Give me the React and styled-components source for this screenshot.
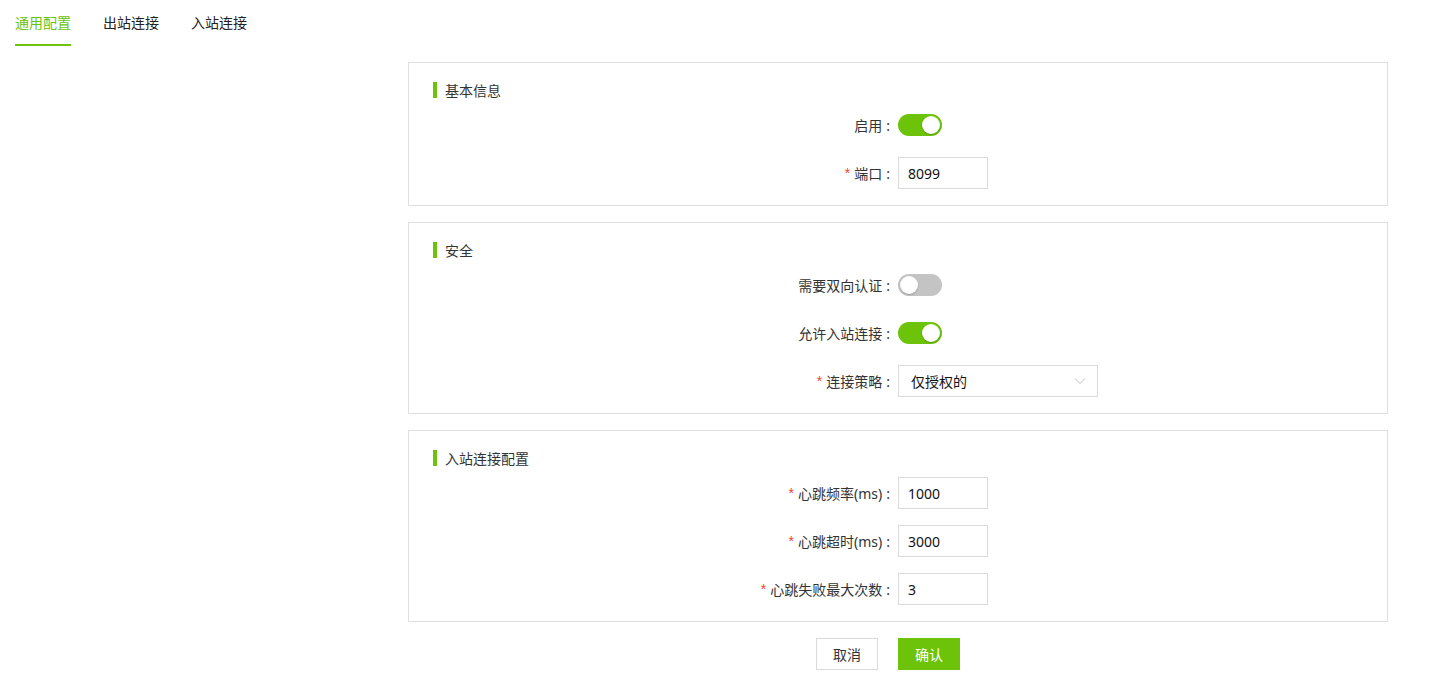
import React, { useState } from "react";
import styled, { createGlobalStyle } from "styled-components";

const GlobalStyle = createGlobalStyle`
  body {
    margin: 0;
    background: #fff;
    font-family: "Noto Sans", "Noto Sans CJK SC", sans-serif;
    font-size: 14px;
    color: #333;
  }
`;

const GREEN = "#6cc30a";

const TabBar = styled.div`
  display: flex;
  gap: 32px;
  padding: 0 15px;
  height: 46px;
`;

const Tab = styled.div`
  padding: 12px 0 10px;
  line-height: 22px;
  font-size: 14px;
  color: ${(p) => (p.$active ? GREEN : "#222")};
  border-bottom: 2px solid ${(p) => (p.$active ? GREEN : "transparent")};
  cursor: pointer;
`;

const Content = styled.div`
  width: 980px;
  margin: 16px 0 0 408px;
  display: flex;
  flex-direction: column;
  gap: 16px;
`;

const Card = styled.section`
  border: 1px solid #e0e0e0;
  padding: 19px 24px 16px;
`;

const SectionTitle = styled.h3`
  margin: 0 0 11px;
  height: 16px;
  display: flex;
  align-items: center;
  font-size: 14px;
  font-weight: normal;
  color: #333;
  &::before {
    content: "";
    width: 4px;
    height: 16px;
    background: ${GREEN};
    margin-right: 8px;
  }
`;

const Rows = styled.div`
  display: flex;
  flex-direction: column;
  gap: 16px;
`;

const Row = styled.div`
  display: grid;
  grid-template-columns: 1fr 1fr;
  height: 32px;
  align-items: center;
`;

const Label = styled.label`
  display: flex;
  justify-content: flex-end;
  align-items: center;
  color: #333;
  white-space: nowrap;
`;

const Star = styled.span`
  color: #f04134;
  margin-right: 4px;
  font-family: "Liberation Sans", sans-serif;
`;

const Colon = styled.span`
  margin: 0 8px 0 4px;
`;

const Control = styled.div`
  display: flex;
  align-items: center;
`;

const SwitchTrack = styled.button`
  position: relative;
  width: 44px;
  height: 22px;
  border: none;
  border-radius: 11px;
  padding: 0;
  background: ${(p) => (p.$on ? GREEN : "#c4c4c4")};
  cursor: pointer;
  &::after {
    content: "";
    position: absolute;
    top: 2px;
    left: ${(p) => (p.$on ? "24px" : "2px")};
    width: 18px;
    height: 18px;
    border-radius: 50%;
    background: #fff;
    box-shadow: 0 1px 2px rgba(0, 0, 0, 0.2);
    transition: left 0.15s;
  }
`;

const Input = styled.input`
  box-sizing: border-box;
  width: 90px;
  height: 32px;
  border: 1px solid #d9d9d9;
  padding: 0 9px;
  font-family: "Noto Sans", "Noto Sans CJK SC", sans-serif;
  font-size: 14px;
  color: #111;
  outline: none;
`;

const Select = styled.div`
  box-sizing: border-box;
  width: 200px;
  height: 32px;
  border: 1px solid #d9d9d9;
  padding: 0 11px 0 12px;
  display: flex;
  align-items: center;
  justify-content: space-between;
  color: #111;
`;

const ButtonRow = styled.div`
  display: grid;
  grid-template-columns: 1fr 1fr;
`;

const Button = styled.button`
  width: 62px;
  height: 32px;
  font-family: "Noto Sans", "Noto Sans CJK SC", sans-serif;
  font-size: 14px;
  border: 1px solid ${(p) => (p.$primary ? GREEN : "#d9d9d9")};
  background: ${(p) => (p.$primary ? GREEN : "#fff")};
  color: ${(p) => (p.$primary ? "#fff" : "#333")};
  cursor: pointer;
`;

const CancelCell = styled.div`
  display: flex;
  justify-content: flex-end;
  padding-right: 20px;
`;

function Switch({ on, onToggle }) {
  return <SwitchTrack $on={on} onClick={onToggle} />;
}

function Field({ label, required, children }) {
  return (
    <Row>
      <Label>
        {required && <Star>*</Star>}
        {label}
        <Colon>:</Colon>
      </Label>
      <Control>{children}</Control>
    </Row>
  );
}

export default function App() {
  const [enabled, setEnabled] = useState(true);
  const [mutual, setMutual] = useState(false);
  const [inbound, setInbound] = useState(true);

  return (
    <>
      <GlobalStyle />
      <TabBar>
        <Tab $active>通用配置</Tab>
        <Tab>出站连接</Tab>
        <Tab>入站连接</Tab>
      </TabBar>
      <Content>
        <Card>
          <SectionTitle>基本信息</SectionTitle>
          <Rows>
            <Field label="启用">
              <Switch on={enabled} onToggle={() => setEnabled(!enabled)} />
            </Field>
            <Field label="端口" required>
              <Input defaultValue="8099" />
            </Field>
          </Rows>
        </Card>
        <Card>
          <SectionTitle>安全</SectionTitle>
          <Rows>
            <Field label="需要双向认证">
              <Switch on={mutual} onToggle={() => setMutual(!mutual)} />
            </Field>
            <Field label="允许入站连接">
              <Switch on={inbound} onToggle={() => setInbound(!inbound)} />
            </Field>
            <Field label="连接策略" required>
              <Select>
                <span>仅授权的</span>
                <svg width="12" height="8" viewBox="0 0 12 8">
                  <polyline
                    points="1,1.5 6,6.5 11,1.5"
                    fill="none"
                    stroke="#bfbfbf"
                    strokeWidth="1"
                  />
                </svg>
              </Select>
            </Field>
          </Rows>
        </Card>
        <Card>
          <SectionTitle>入站连接配置</SectionTitle>
          <Rows>
            <Field label="心跳频率(ms)" required>
              <Input defaultValue="1000" />
            </Field>
            <Field label="心跳超时(ms)" required>
              <Input defaultValue="3000" />
            </Field>
            <Field label="心跳失败最大次数" required>
              <Input defaultValue="3" />
            </Field>
          </Rows>
        </Card>
        <ButtonRow>
          <CancelCell>
            <Button>取消</Button>
          </CancelCell>
          <div>
            <Button $primary>确认</Button>
          </div>
        </ButtonRow>
      </Content>
    </>
  );
}
